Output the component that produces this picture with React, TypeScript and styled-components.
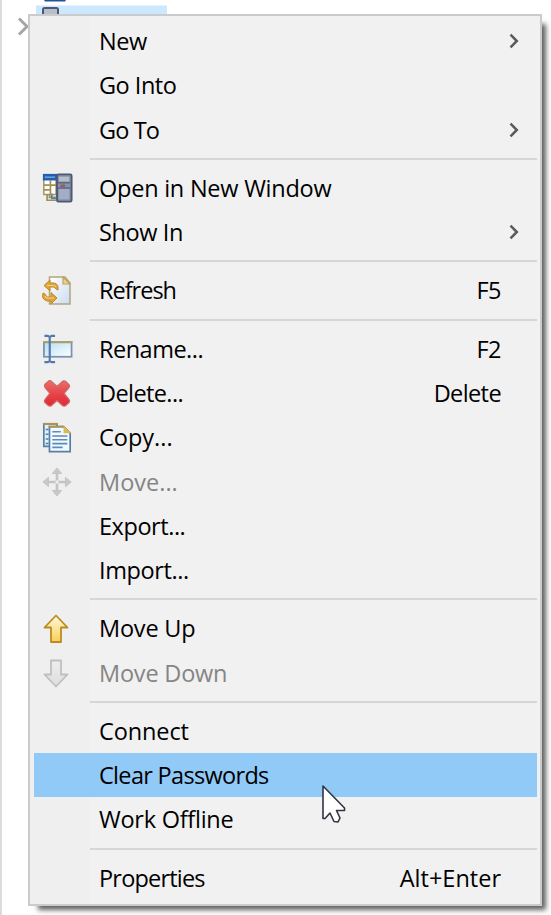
import React, { ReactNode } from "react";
import styled, { createGlobalStyle, css } from "styled-components";

const Global = createGlobalStyle`
  * { box-sizing: border-box; }
  body { margin: 0; background: #fff; overflow: hidden; }
`;

const Page = styled.div`
  position: relative;
  width: 551px;
  height: 915px;
  overflow: hidden;
  border-left: 2px solid #dcdcdc;
  background: #fff;
  font-family: "Open Sans", "Noto Sans", sans-serif;
`;

const TreeBackdrop = styled.svg`
  position: absolute;
  left: -2px;
  top: 0;
`;

const Menu = styled.ul`
  position: absolute;
  left: 26px;
  top: 14px;
  width: 514px;
  height: 892px;
  margin: 0;
  padding: 3px 3px 0 4px;
  list-style: none;
  background: linear-gradient(90deg, #efefef 60px, #f1f1f1 60px);
  border: 2px solid #cbcbcb;
  box-shadow: 7px 7px 5px -3px rgba(0, 0, 0, 0.62);
`;

const Row = styled.li<{ $active?: boolean; $disabled?: boolean }>`
  display: grid;
  grid-template-columns: 46px 1fr auto 36px;
  align-items: center;
  height: 44.24px;
  color: ${(p) => (p.$disabled ? "#858585" : "#000")};
  ${(p) =>
    p.$active &&
    css`
      background: #91c9f7;
    `}
`;

const IconCell = styled.span`
  display: flex;
  padding-left: 7px;
  svg { display: block; }
`;

const Label = styled.span<{ $spacing?: number }>`
  padding-left: 19px;
  font-size: 23.5px;
  line-height: 32px;
  white-space: pre;
  letter-spacing: ${(p) => p.$spacing ?? 0}px;
`;

const Shortcut = styled(Label)`
  padding-left: 0;
`;

const Separator = styled.li`
  height: 14.1px;
  display: flex;
  align-items: center;
  padding-left: 56px;
  &::after {
    content: "";
    flex: 1;
    height: 2px;
    background: #d6d6d6;
  }
`;

const Arrow = () => (
  <svg width="36" height="20" viewBox="0 0 36 20">
    <path d="M9.5 3.7L15.8 10L9.5 16.3" fill="none" stroke="#5a5a5a" strokeWidth="2.5" />
  </svg>
);

const WindowIcon = () => (
  <svg width="32" height="32" viewBox="1 1 34 34">
    <path d="M4 5H17V25H4Z" fill="#fff" stroke="#a89558" strokeWidth="1.6" />
    <path d="M7.5 25V31H17M10 25V28H17M11 10V25M4 15H10M4 20H10M11 15H17" fill="none" stroke="#a08f54" strokeWidth="1.8" />
    <path d="M12.5 24V29H17" fill="none" stroke="#5484b0" strokeWidth="1.8" />
    <rect x="3" y="3" width="15" height="7" fill="#245cae" />
    <path d="M5 6.5H16" stroke="#78a8df" strokeWidth="1.5" />
    <rect x="18" y="3.5" width="15.5" height="29" rx="1.5" fill="#8893a8" stroke="#4c5874" strokeWidth="2" />
    <path d="M20 6H31V11H20Z" fill="#b4becd" />
    <path d="M20 19H31V30H20Z" fill="#a2aec8" />
    <path d="M19 12.5H32M19 18H32" stroke="#5e6a82" strokeWidth="1.5" />
    <rect x="21.5" y="14.5" width="5" height="2.5" fill="#bd4864" />
    <rect x="23" y="13.2" width="3" height="1.8" fill="#559272" />
  </svg>
);

const RefreshIcon = () => (
  <svg width="32" height="32" viewBox="1 1 32 32">
    <defs>
      <linearGradient id="page" x2="1" y2="1">
        <stop stopColor="#fff" />
        <stop offset="1" stopColor="#cbdcf3" />
      </linearGradient>
    </defs>
    <path d="M9.5 4H25L30 10V31H9.5Z" fill="url(#page)" stroke="#b4a57d" strokeWidth="1.5" />
    <path d="M23 4V11H30Z" fill="#edd487" stroke="#bda35e" strokeWidth="1.2" />
    <g fill="#dea43c" stroke="#c18a25" strokeLinejoin="round">
      <path d="M4 12.5L10 7V10H14Q19 11 18 17L16 16L14 14H10V18Z" />
      <path d="M17 25L11 31V28H7Q1 26 3 20L5 21L7 24H11V19.5Z" />
    </g>
    <path d="M7 12.5H13Q15 12.5 16 14M14 25H8Q6 25 5 23" fill="none" stroke="#f6d184" strokeWidth="1.2" />
  </svg>
);

const RenameIcon = () => (
  <svg width="33" height="33" viewBox="1 1 34 34">
    <defs>
      <linearGradient id="field" x2="1" y2="1">
        <stop stopColor="#b5dcf3" />
        <stop offset="1" stopColor="#fff" />
      </linearGradient>
    </defs>
    <rect x="4" y="11.5" width="28.5" height="15" fill="url(#field)" stroke="#7892b0" strokeWidth="1.8" />
    <path d="M3 11.5H33.5" stroke="#aa9f66" strokeWidth="2" />
    <path d="M4.5 5H8L10 6L12 5H15.5M10 6V31M4.5 32H8L10 31L12 32H15.5" fill="none" stroke="#5478ab" strokeWidth="2.2" />
  </svg>
);

const DeleteIcon = () => (
  <svg width="32" height="32" viewBox="1 0 34 34">
    <defs>
      <linearGradient id="cross" x2="0" y2="1">
        <stop stopColor="#e7706e" />
        <stop offset=".55" stopColor="#e74247" />
        <stop offset="1" stopColor="#df2934" />
      </linearGradient>
    </defs>
    <path
      d="M9.5 4Q11 3.5 12.5 5L18 10L23.5 5Q25 3.5 27 4.5L31 8.5Q32 10 30.5 11.5L25.5 17.5L30.5 23.5Q32 25 31 27L27 30.5Q25 31.5 23.5 30L18 25L12.5 30Q11 31.5 9 30.5L5 27Q4 25 5.5 23.5L10.5 17.5L5.5 11.5Q4 10 5 8Z"
      fill="url(#cross)" stroke="#d36566" strokeWidth="1.3" strokeLinejoin="round"
    />
  </svg>
);

const CopyIcon = () => (
  <svg width="32" height="32" viewBox="1 1 34 34">
    <path d="M4 4H18V28H4Z" fill="#e3f0fa" stroke="#557fa6" strokeWidth="1.8" />
    <path d="M3 4H19" stroke="#b29348" strokeWidth="2" />
    <path d="M6 10H9M6 15H9M6 20H9M6 25H9" stroke="#4e7fb3" strokeWidth="1.6" />
    <path d="M10 7H25L32 14V33.5H10Z" fill="#f2f9ff" stroke="#557fa6" strokeWidth="1.8" />
    <path d="M9 7H25L32 14" fill="none" stroke="#b29348" strokeWidth="1.8" />
    <path d="M25 6V14H33Z" fill="#dfb75a" />
    <path d="M13 12.5H22M13 17H29M13 21H29M13 25H29M13 29H24" stroke="#5d8bbb" strokeWidth="1.7" />
  </svg>
);

const MoveIcon = () => (
  <svg width="32" height="32" viewBox="1 1 34 34">
    <path d="M18 6V30M6 18H30" stroke="#c4c4c4" strokeWidth="2.8" />
    <path d="M18 3L23 9H13ZM18 33L13 27H23ZM3 18L9 13V23ZM33 18L27 23V13Z" fill="#c8c8c8" stroke="#c4c4c4" />
    <circle cx="18" cy="18" r="1.8" fill="#eee" />
  </svg>
);

const BlockArrow = ({ down = false }: { down?: boolean }) => (
  <svg width="34" height="34" viewBox="2 0 34 34">
    <defs>
      <linearGradient id="gold" x2="0" y2="1">
        <stop stopColor="#fff9dc" />
        <stop offset="1" stopColor="#f8cf57" />
      </linearGradient>
      <linearGradient id="silver" x2="0" y2="1">
        <stop stopColor="#ededed" />
        <stop offset="1" stopColor="#dedede" />
      </linearGradient>
    </defs>
    {down ? (
      <path d="M12 4.5H22V18.5H28.5L17 30.5L5.5 18.5H12Z" fill="url(#silver)" stroke="#bfbfbf" strokeWidth="1.8" strokeLinejoin="round" />
    ) : (
      <path d="M17 4.5L28.5 16.5H22V31H12V16.5H5.5Z" fill="url(#gold)" stroke="#bd8c20" strokeWidth="1.8" strokeLinejoin="round" />
    )}
  </svg>
);

const Pointer = styled.svg`
  position: absolute;
  left: 314px;
  top: 781px;
`;

type Entry = {
  label: string;
  spacing?: number;
  shortcut?: string;
  shortcutSpacing?: number;
  icon?: ReactNode;
  submenu?: boolean;
  disabled?: boolean;
  active?: boolean;
};

const groups: Entry[][] = [
  [
    { label: "New", spacing: -0.4, submenu: true },
    { label: "Go Into", spacing: -0.5 },
    { label: "Go To", spacing: -0.9, submenu: true },
  ],
  [
    { label: "Open in New Window", spacing: -0.24, icon: <WindowIcon /> },
    { label: "Show In", spacing: -0.4, submenu: true },
  ],
  [{ label: "Refresh", spacing: -1, shortcut: "F5", shortcutSpacing: -0.5, icon: <RefreshIcon /> }],
  [
    { label: "Rename...", spacing: -0.5, shortcut: "F2", shortcutSpacing: -0.5, icon: <RenameIcon /> },
    { label: "Delete...", spacing: -0.6, shortcut: "Delete", shortcutSpacing: -0.6, icon: <DeleteIcon /> },
    { label: "Copy...", icon: <CopyIcon /> },
    { label: "Move...", icon: <MoveIcon />, disabled: true },
    { label: "Export...", spacing: -0.45 },
    { label: "Import...", spacing: -0.4 },
  ],
  [
    { label: "Move Up", spacing: -0.2, icon: <BlockArrow /> },
    { label: "Move Down", spacing: -0.2, icon: <BlockArrow down />, disabled: true },
  ],
  [
    { label: "Connect", spacing: -0.1 },
    { label: "Clear Passwords", spacing: -0.68, active: true },
    { label: "Work Offline", spacing: -0.25 },
  ],
  [{ label: "Properties", spacing: -0.8, shortcut: "Alt+Enter" }],
];

export default function App() {
  return (
    <>
      <Global />
      <Page>
        <TreeBackdrop width="180" height="50" viewBox="0 0 180 50">
          <rect x="36" y="5.5" width="131" height="20" fill="#cce8ff" />
          <path d="M44 0H66L65 1.5H45Z" fill="#24529a" />
          <rect x="43" y="8" width="15" height="12" rx="1.5" fill="#b8bfca" stroke="#4c5874" strokeWidth="2" />
          <path d="M19 18.5L27 26.5L19 34.5" fill="none" stroke="#a6a6a6" strokeWidth="3" />
        </TreeBackdrop>
        <Menu>
          {groups.map((group, index) => (
            <React.Fragment key={index}>
              {index > 0 && <Separator />}
              {group.map((item) => (
                <Row key={item.label} $active={item.active} $disabled={item.disabled}>
                  <IconCell>{item.icon}</IconCell>
                  <Label $spacing={item.spacing}>{item.label}</Label>
                  <Shortcut $spacing={item.shortcutSpacing}>{item.shortcut}</Shortcut>
                  {item.submenu && <Arrow />}
                </Row>
              ))}
            </React.Fragment>
          ))}
        </Menu>
        <Pointer width="30" height="44" viewBox="0 0 30 44">
          <path
            d="M7 5V37.5H9L14 32L18 40.5L22 41L24 37L20.5 29.5H28.5V27Z"
            fill="#fff" stroke="#34343f" strokeWidth="1.6" strokeLinejoin="round"
          />
        </Pointer>
      </Page>
    </>
  );
}
